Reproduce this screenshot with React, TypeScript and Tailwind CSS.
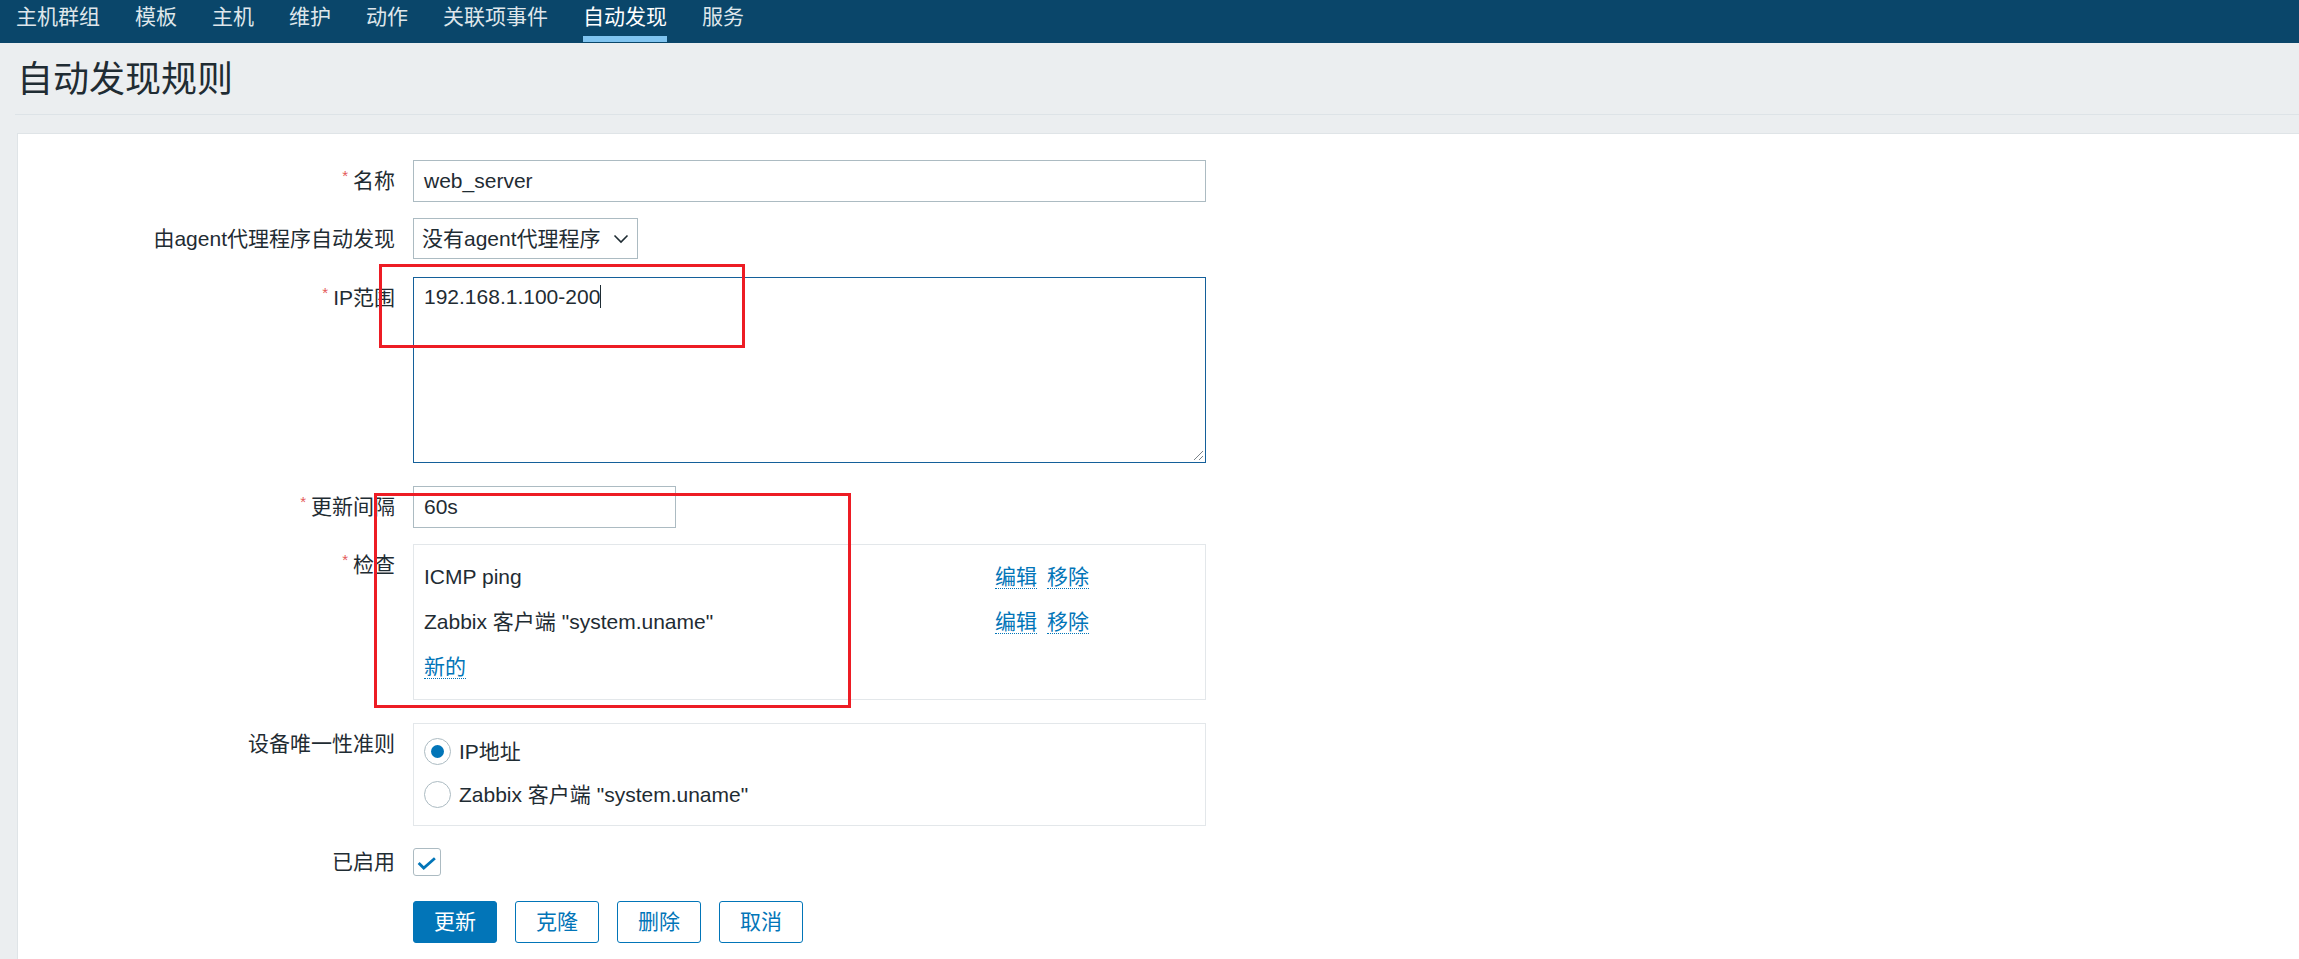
import type { ReactNode } from "react";
import clsx from "clsx";

const navItems = ["主机群组", "模板", "主机", "维护", "动作", "关联项事件", "自动发现", "服务"];

function Row({
	label,
	required,
	center,
	className,
	children,
}: {
	label: string;
	required?: boolean;
	center?: boolean;
	className?: string;
	children: ReactNode;
}) {
	return (
		<div className={clsx("flex gap-[18px]", center ? "items-center" : "items-start", className)}>
			<div className="w-[377px] h-[42px] shrink-0 flex items-center justify-end">
				{required && <span className="text-[15px] text-[#e45959] mr-[5px] -mt-[10px]">*</span>}
				<span>{label}</span>
			</div>
			{children}
		</div>
	);
}

function Link({ children }: { children: ReactNode }) {
	return (
		<span className="text-[#0275b8] border-b border-dotted border-[#0275b8] leading-[23px]">{children}</span>
	);
}

function Radio({ checked }: { checked?: boolean }) {
	return (
		<span className="w-[27px] h-[27px] rounded-full border border-[#acbbc2] bg-white flex items-center justify-center shrink-0">
			{checked && <span className="w-[13px] h-[13px] rounded-full bg-[#0275b8]" />}
		</span>
	);
}

export default function App() {
	const checks = ["ICMP ping", 'Zabbix 客户端 "system.uname"'];

	return (
		<div
			className="relative min-h-[959px] flex flex-col bg-[#ebeef0] text-[#1f2c33] text-[21px]"
			style={{ fontFamily: '"Liberation Sans", Arial, "Noto Sans CJK SC", sans-serif' }}
		>
			{/* top nav */}
			<nav className="h-[43px] bg-[#0a466a] flex gap-[35px] px-[16px] shrink-0">
				{navItems.map((item) => {
					const active = item === "自动发现";
					return (
						<div key={item} className="flex flex-col h-full">
							<span className={clsx("pt-[6px] leading-none", active ? "text-white" : "text-[#dfe6eb]")}>
								{item}
							</span>
							{active && <span className="mt-auto mb-[1px] h-[6px] bg-[#80c4f0]" />}
						</div>
					);
				})}
			</nav>

			{/* page header */}
			<h1 className="mt-[19px] pl-[17px] text-[36px] leading-none font-normal">自动发现规则</h1>
			<div className="mt-[16px] ml-[15px] h-px bg-[#dde3e7]" />

			{/* form panel */}
			<div className="mt-[18px] ml-[17px] flex-1 bg-white border-t border-l border-[#dfe4e7] pt-[26px]">
				<Row label="名称" required>
					<div className="w-[793px] h-[42px] border border-[#acbbc2] px-[10px] flex items-center">web_server</div>
				</Row>

				<Row label="由agent代理程序自动发现" className="mt-[16px]">
					<div className="w-[225px] h-[41px] border border-[#acbbc2] pl-[8px] pr-[8px] flex items-center justify-between">
						<span>没有agent代理程序</span>
						<svg width="16" height="10" viewBox="0 0 16 10">
							<polyline points="1.5,1.5 8,8 14.5,1.5" fill="none" stroke="#1f2c33" strokeWidth="1.6" />
						</svg>
					</div>
				</Row>

				<Row label="IP范围" required className="mt-[17px]">
					<div className="relative w-[793px] h-[186px] border border-[#14609a] px-[10px] pt-[7px] leading-[24px]">
						<span>192.168.1.100-200</span>
						<span className="inline-block w-px h-[23px] bg-[#1f2c33] align-middle -mt-[3px]" />
						<svg width="12" height="12" viewBox="0 0 12 12" className="absolute right-[1px] bottom-[1px]">
							<line x1="11" y1="2" x2="2" y2="11" stroke="#7a8288" strokeWidth="1" />
							<line x1="11" y1="7" x2="7" y2="11" stroke="#7a8288" strokeWidth="1" />
						</svg>
					</div>
				</Row>

				<Row label="更新间隔" required className="mt-[23px]">
					<div className="w-[263px] h-[42px] border border-[#acbbc2] px-[10px] flex items-center">60s</div>
				</Row>

				<Row label="检查" required className="mt-[16px]">
					<div className="w-[793px] border border-[#e3e7ea] pt-[9px] pb-[10px] px-[10px]">
						{checks.map((c) => (
							<div key={c} className="h-[45px] flex items-center">
								<span className="w-[571px] shrink-0">{c}</span>
								<span className="flex gap-[10px]">
									<Link>编辑</Link>
									<Link>移除</Link>
								</span>
							</div>
						))}
						<div className="h-[45px] flex items-center">
							<Link>新的</Link>
						</div>
					</div>
				</Row>

				<Row label="设备唯一性准则" className="mt-[23px]">
					<div className="w-[793px] border border-[#e3e7ea] pt-[6px] pb-[9px] px-[10px]">
						<div className="h-[43px] flex items-center gap-[8px]">
							<Radio checked />
							<span>IP地址</span>
						</div>
						<div className="h-[43px] flex items-center gap-[8px]">
							<Radio />
							<span>Zabbix 客户端 "system.uname"</span>
						</div>
					</div>
				</Row>

				<Row label="已启用" center className="mt-[15px]">
					<span className="w-[28px] h-[28px] rounded-[3px] border border-[#acbbc2] flex items-center justify-center">
						<svg width="28" height="28" viewBox="0 0 28 28">
							<polyline points="5,15 10.5,20.5 22.5,10" fill="none" stroke="#0275b8" strokeWidth="3" />
						</svg>
					</span>
				</Row>

				<div className="mt-[18px] pl-[395px] flex gap-[18px]">
					<button className="w-[84px] h-[42px] rounded-[3px] bg-[#0275b8] border border-[#0275b8] text-white">
						更新
					</button>
					{["克隆", "删除", "取消"].map((b) => (
						<button
							key={b}
							className="w-[84px] h-[42px] rounded-[3px] bg-white border border-[#0275b8] text-[#0275b8]"
						>
							{b}
						</button>
					))}
				</div>
			</div>

			{/* red annotation boxes */}
			<div className="absolute left-[379px] top-[264px] w-[366px] h-[84px] border-[3px] border-[#ed1c24] pointer-events-none" />
			<div className="absolute left-[374px] top-[493px] w-[477px] h-[215px] border-[3px] border-[#ed1c24] pointer-events-none" />
		</div>
	);
}
